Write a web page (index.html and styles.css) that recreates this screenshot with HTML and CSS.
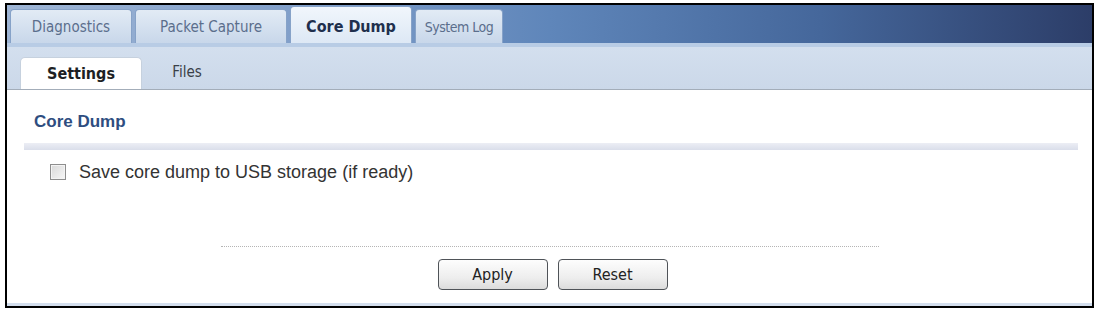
FILE: index.html
```html
<!DOCTYPE html>
<html lang="en">
<head>
  <meta charset="UTF-8">
  <title>Core Dump</title>
  <link rel="stylesheet" href="styles.css">
</head>
<body>
  <div class="frame">
    <div class="topbar">
      <div class="tab tab-diag">Diagnostics</div>
      <div class="tab tab-packet">Packet Capture</div>
      <div class="tab tab-core active">Core Dump</div>
      <div class="tab tab-log">System Log</div>
    </div>
    <div class="subbar">
      <div class="subtab active">Settings</div>
      <div class="subtab subtab-files">Files</div>
    </div>
    <div class="content">
      <div class="section-title">Core Dump</div>
      <div class="section-rule"></div>
      <label class="option"><span class="checkbox"></span>Save core dump to USB storage (if ready)</label>
      <div class="dotted"></div>
      <div class="buttons">
        <button class="btn">Apply</button>
        <button class="btn">Reset</button>
      </div>
    </div>
  </div>
</body>
</html>
```

FILE: styles.css
```css
*{
  margin: 0;
  padding: 0;
  box-sizing: border-box;
}
body{
  background: #fff;
  font-family: "Liberation Sans", Arial, sans-serif;
}
.frame{
  margin: 3px 0 0 5px;
  width: 1089px;
  height: 305px;
  border: 2px solid #000;
  display: flex;
  flex-direction: column;
}
/* top tabs */
.topbar{
  height: 38px;
  display: flex;
  align-items: flex-end;
  gap: 3px;
  padding-left: 3px;
  background: linear-gradient(to right, #9fb6d6 0%, #7d9cc8 30%, #5f86ba 50%, #45679b 75%, #2c3d68 100%);
}
.tab{
  height: 34px;
  border: 1px solid #86a2c8;
  border-bottom: none;
  border-radius: 4px 4px 0 0;
  background: linear-gradient(#e2ebf5, #c8d7ea);
  color: #5b6e8c;
  font-family: "DejaVu Sans Condensed", "Liberation Sans Narrow", sans-serif;
  font-size: 15px;
  display: flex;
  align-items: center;
  justify-content: center;
}
.tab-diag{ width: 122px; }
.tab-packet{ width: 152px; }
.tab-core{ width: 122px; }
.tab-log{
  width: 88px;
  font-size: 14px;
  letter-spacing: -0.5px;
}
.tab.active{
  height: 37px;
  background: linear-gradient(#f1f6fc, #dde8f5);
  color: #1f2f4d;
  font-size: 16px;
  font-weight: bold;
  padding-top: 2px;
}
/* sub tabs */
.subbar{
  height: 47px;
  border-top: 4px solid #b8cce5;
  border-bottom: 1px solid #a3adb9;
  background: linear-gradient(#d3dfee, #cbd8e9);
  display: flex;
  align-items: flex-end;
  padding-left: 13px;
}
.subtab{
  height: 32px;
  width: 122px;
  display: flex;
  align-items: center;
  justify-content: center;
  font-family: "DejaVu Sans Condensed", "Liberation Sans Narrow", sans-serif;
  font-size: 15px;
  color: #3a3f48;
  padding-bottom: 3px;
}
.subtab.active{
  background: #fff;
  border: 1px solid #c6d1de;
  border-bottom: none;
  border-radius: 5px 5px 0 0;
  font-size: 16px;
  font-weight: bold;
  color: #1d1f24;
  padding-bottom: 0;
}
.subtab-files{
  width: 90px;
}
/* content */
.content{
  flex: 1;
  background: #fff;
  border-bottom: 3px solid #d3deed;
  display: flex;
  flex-direction: column;
}
.section-title{
  margin: 21px 0 0 27px;
  height: 22px;
  line-height: 22px;
  font-size: 17px;
  font-weight: bold;
  color: #2e4d80;
}
.section-rule{
  margin: 10px 0 0 17px;
  width: 1054px;
  height: 7px;
  background: linear-gradient(#eceef5, #dadeea);
}
.option{
  margin: 11px 0 0 43px;
  height: 22px;
  display: flex;
  align-items: center;
  font-size: 18px;
  color: #333;
}
.checkbox{
  width: 16px;
  height: 16px;
  margin-right: 13px;
  border: 1px solid #8e8e8e;
  background: linear-gradient(135deg, #d9d9d9, #f7f7f7);
  box-shadow: inset 0 0 0 1px #f4f4f4;
}
.dotted{
  margin: 63px auto 0;
  width: 658px;
  border-top: 1px dotted #b5b5b5;
}
.buttons{
  margin-top: 12px;
  display: flex;
  justify-content: center;
  gap: 10px;
  padding-left: 6px;
}
.btn{
  width: 110px;
  height: 31px;
  border: 1px solid #4f5358;
  border-radius: 4px;
  background: linear-gradient(#fdfdfd 0%, #eeeeee 60%, #dcdcdc 100%);
  font-family: "DejaVu Sans Condensed", "Liberation Sans Narrow", sans-serif;
  font-size: 16px;
  color: #222;
}
```
